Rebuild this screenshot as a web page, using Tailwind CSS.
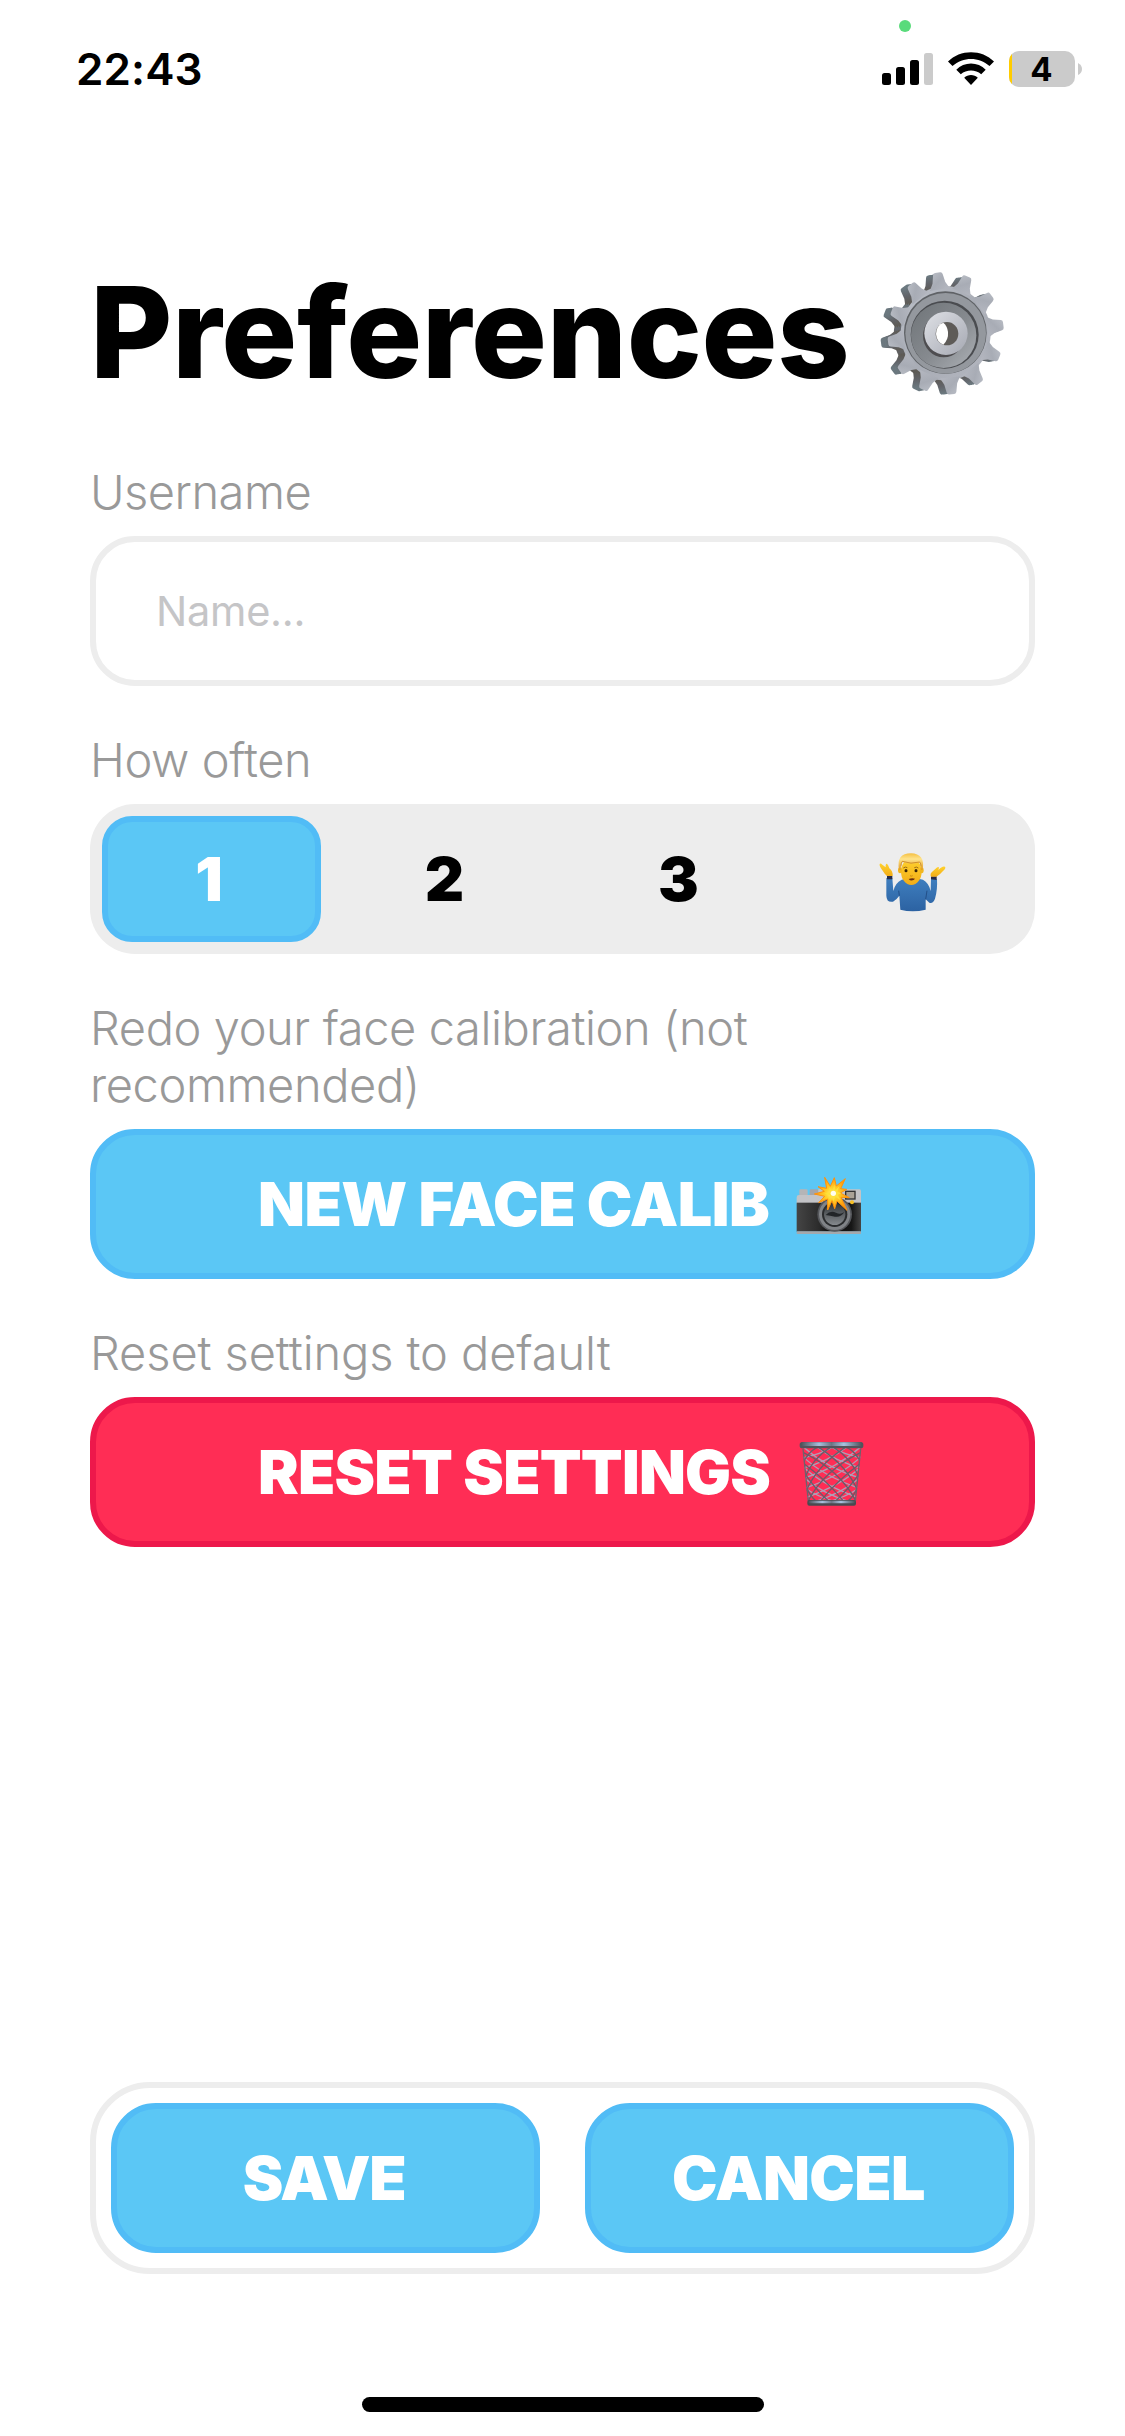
<!DOCTYPE html>
<html lang="en">
<head>
<meta charset="utf-8">
<title>Preferences</title>
<script src="https://cdn.jsdelivr.net/npm/@tailwindcss/browser@4"></script>
</head>
<body class="bg-white">
<div class="relative flex h-[2436px] w-[1125px] flex-col overflow-hidden bg-white font-['Inter',sans-serif] text-black">

  <!-- Status bar -->
  <div class="absolute left-[899px] top-[20px] size-3 rounded-full bg-[#59db7b]"></div>
  <header class="flex h-[138px] items-center pl-[76px] pr-[42px]">
    <span class="text-[44px] font-semibold leading-none tracking-[0.1px]">22:43</span>
    <svg class="ml-auto" width="202" height="38" viewBox="881 50 202 38">
      <rect x="882" y="73" width="9" height="12" rx="2.5"/>
      <rect x="896" y="67" width="9" height="18" rx="2.5"/>
      <rect x="910" y="60" width="9" height="25" rx="2.5"/>
      <rect x="924" y="53" width="9" height="32" rx="2.5" fill="#cbcbcb"/>
      <path d="M948 61.5 C960 49 982 49 994 61.5 L989.5 66 C979 56.500 963 56.500 952.500 66 Z"/>
      <path d="M956.300 69.700 C964 61.500 978 61.500 985.700 69.700 L981.200 74.300 C975.500 69.300 966.500 69.300 960.800 74.300 Z"/>
      <path d="M964.200 77.700 C968 74 974 74 977.800 77.700 L971 85 Z"/>
      <clipPath id="batt"><rect x="1009" y="51" width="66" height="36" rx="10"/></clipPath>
      <g clip-path="url(#batt)">
        <rect x="1009" y="51" width="66" height="36" fill="#cbcbcb"/>
        <rect x="1009" y="51" width="3" height="36" fill="#ffcc00"/>
      </g>
      <path d="M1078 63 Q1082 65 1082 69 Q1082 73 1078 75 Z" fill="#cbcbcb"/>
      <text x="1041.500" y="81" text-anchor="middle" font-size="33" font-weight="700">4</text>
    </svg>
  </header>

  <main class="flex flex-1 flex-col px-[90px] pt-[122px]">
    <div class="flex h-[144px] items-center">
      <h1 class="w-[770px] whitespace-nowrap text-[126.5px] font-extrabold leading-none tracking-[-0.35px]">Preferences</h1>
      <svg class="shrink-0 self-start" width="160" height="150" viewBox="0 0 480 450">
        <defs>
          <linearGradient id="face" x1="0" y1="0" x2="1" y2="1"><stop offset="0" stop-color="#bdc1c9"/><stop offset=".5" stop-color="#a8acb5"/><stop offset="1" stop-color="#b4b7c0"/></linearGradient>
          <linearGradient id="side" x1="0" y1="0" x2="0" y2="1"><stop offset="0" stop-color="#6c7a81"/><stop offset=".5" stop-color="#626469"/><stop offset="1" stop-color="#5d5952"/></linearGradient>
          <linearGradient id="hub" x1="0" y1="0" x2="1" y2="1"><stop offset="0" stop-color="#dfe1e6"/><stop offset="1" stop-color="#a5a8b2"/></linearGradient>
          <linearGradient id="dish" x1="0" y1="0" x2="1" y2="1"><stop offset="0" stop-color="#6f7478"/><stop offset=".55" stop-color="#868a8f"/><stop offset="1" stop-color="#aeb2b7"/></linearGradient>
          <path id="tooth" d="M-31 -130 L-20 -150 L-15 -174 Q-14 -180 -8 -180 H8 Q14 -180 15 -174 L20 -150 L31 -130 Z"/>
          <g id="gear">
            <circle r="139"/>
            <use href="#tooth" transform="rotate(-8)"/><use href="#tooth" transform="rotate(22)"/><use href="#tooth" transform="rotate(52)"/>
            <use href="#tooth" transform="rotate(82)"/><use href="#tooth" transform="rotate(113)"/><use href="#tooth" transform="rotate(144)"/>
            <use href="#tooth" transform="rotate(174)"/><use href="#tooth" transform="rotate(203)"/><use href="#tooth" transform="rotate(232)"/>
            <use href="#tooth" transform="rotate(262)"/><use href="#tooth" transform="rotate(292)"/><use href="#tooth" transform="rotate(323)"/>
          </g>
        </defs>
        <g fill="url(#side)">
          <use href="#gear" transform="translate(236 224) scale(.97 1)"/>
          <use href="#gear" transform="translate(241 223) scale(.97 1)"/>
          <use href="#gear" transform="translate(247 222) scale(.97 1)"/>
        </g>
        <use href="#gear" transform="translate(257 220) scale(.97 1.020)" fill="url(#face)"/>
        <circle cx="256" cy="218" r="124" fill="#5f6266"/>
        <circle cx="257" cy="220" r="121" fill="#94989e"/>
        <circle cx="254" cy="224" r="102" fill="#4a4c50"/>
        <circle cx="251" cy="226" r="98" fill="url(#dish)"/>
        <ellipse cx="251" cy="227" rx="62" ry="65" fill="#4e4d50"/>
        <ellipse cx="258" cy="220" rx="65" ry="65" fill="url(#hub)"/>
        <ellipse cx="261" cy="221" rx="34" ry="35" fill="#5e5b58"/>
        <path d="M250 188 Q229 195 228 222 Q230 246 250 254 Q266 238 264 216 Q262 198 250 188Z" fill="#fff"/>
      </svg>
    </div>

    <section class="mt-[59px]">
      <p class="text-[47px] font-light leading-[57px] tracking-[-0.5px] text-[#999]">Username</p>
      <div class="mt-4 flex h-[150px] items-center rounded-[45px] border-[6px] border-[#ededed] pl-[60px] pt-px text-[41.5px] leading-none tracking-[-0.25px] text-[#c5c5c7]">Name...</div>
    </section>

    <section class="mt-[45px]">
      <p class="text-[47px] font-light leading-[57px] tracking-[-0.4px] text-[#999]">How often</p>
      <div class="mt-4 grid h-[150px] grid-cols-4 gap-[15px] rounded-[45px] bg-[#ededed] p-3 text-[61px] font-black leading-none">
        <div class="flex items-center justify-center rounded-[30px] border-[6px] border-[#51bcf6] bg-[#5bc7f5] pr-[5px] text-white">1</div>
        <div class="flex items-center justify-center pr-0.5">2</div>
        <div class="flex items-center justify-center pr-0.5">3</div>
        <div class="flex items-center justify-center pr-[3px] pt-[5px]">
          <svg width="70" height="70" viewBox="50 50 210 210">
            <defs>
              <linearGradient id="shirt" x1="0" y1="0" x2="0" y2="1"><stop offset="0" stop-color="#3f7fbf"/><stop offset="1" stop-color="#2c62a2"/></linearGradient>
              <linearGradient id="skin" x1="0" y1="0" x2="0" y2="1"><stop offset="0" stop-color="#ffd22e"/><stop offset="1" stop-color="#f2ac17"/></linearGradient>
              <linearGradient id="hair" x1="0" y1="0" x2="0" y2="1"><stop offset="0" stop-color="#f5c043"/><stop offset=".35" stop-color="#ffe48c"/><stop offset="1" stop-color="#e09a22"/></linearGradient>
            </defs>
            <path d="M78 143 H96 L99 182 Q104 158 124 148 Q140 143 155 146 Q172 143 188 148 Q206 158 211 182 L212 145 L230 147 Q232 178 224 205 Q217 222 207 217 L196 207 V238 Q157 248 120 238 L117 196 Q108 209 98 214 Q79 218 78 196 Z" fill="url(#shirt)"/>
            <path d="M117 196 L115 181 M196 207 L200 181" stroke="#234f88" stroke-width="3" fill="none"/>
            <path d="M80 137 H96 V147 H80 Z M212 138 H229 V149 L212 147 Z" fill="#262b48"/>
            <path d="M80 137 Q73 131 67 121 Q56 108 58 101 Q60 97 66 103 L76 111 Q75 99 80 100 Q84 104 87 114 Q98 122 97 137 Z" fill="url(#skin)"/>
            <path d="M212 139 Q207 129 219 121 L229 112 Q235 108 236 112 L234 119 Q246 106 254 109 Q258 113 248 122 Q239 133 228 139 Z" fill="url(#skin)"/>
            <ellipse cx="153" cy="124" rx="31" ry="40" fill="url(#skin)"/>
            <ellipse cx="119" cy="120" rx="6" ry="9" fill="#f1b61f"/>
            <ellipse cx="184" cy="120" rx="6" ry="9" fill="#f1b61f"/>
            <path d="M116 118 Q107 69 152 69 Q195 70 187 118 L182 118 Q183 105 178 96 Q152 104 126 94 Q120 103 121 118 Z" fill="url(#hair)"/>
            <path d="M122 108 Q122 98 126 93 Q152 103 178 95 Q182 100 182 108" stroke="#c9831a" stroke-width="2.500" fill="none"/>
            <path d="M129 113 Q135 108 141 112 M162 112 Q168 108 174 113" stroke="#9b6b12" stroke-width="3" fill="none"/>
            <ellipse cx="137" cy="121" rx="4.500" ry="5" fill="#3a2508"/>
            <ellipse cx="167" cy="121" rx="4.500" ry="5" fill="#3a2508"/>
            <path d="M149 136 Q153 139 157 136" stroke="#c8860f" stroke-width="3" fill="none"/>
            <path d="M145 146 Q155 142 164 145 Q160 152 149 150 Z" fill="#6a2f10"/>
          </svg>
        </div>
      </div>
    </section>

    <section class="mt-[45px]">
      <p class="text-[47px] font-light leading-[57px] tracking-[-0.4px] text-[#999]">Redo your face calibration (not<br>recommended)</p>
      <div class="mt-4 flex h-[150px] items-center rounded-[45px] border-[6px] border-[#51bcf6] bg-[#5bc7f5] pl-[162px] text-[61px] font-black leading-none text-white">
        <span class="w-[535px] whitespace-nowrap tracking-[-0.5px]">NEW FACE CALIB</span>
        <svg class="mt-[9px]" width="70" height="70" viewBox="70 190 210 210">
          <defs>
            <linearGradient id="leather" x1="0" y1="0" x2="1" y2="0"><stop offset="0" stop-color="#454545"/><stop offset=".35" stop-color="#2b2b2b"/><stop offset=".5" stop-color="#0c0c0c"/><stop offset=".85" stop-color="#161616"/><stop offset="1" stop-color="#454545"/></linearGradient>
            <radialGradient id="burst"><stop offset="0" stop-color="#fff27a"/><stop offset=".35" stop-color="#ffd22c"/><stop offset="1" stop-color="#ff960a"/></radialGradient>
            <linearGradient id="lens" x1="0" y1="0" x2="0" y2="1"><stop offset="0" stop-color="#33373a"/><stop offset="1" stop-color="#85898d"/></linearGradient>
          </defs>
          <rect x="89" y="236" width="25" height="22" rx="4" fill="#b5b5b7"/>
          <rect x="120" y="236" width="26" height="22" rx="4" fill="#a5a5a8"/>
          <path d="M81 260 Q81 253 88 253 H146 V236 H270 Q274 236 274 242 V280 H81 Z" fill="#c3c3c6"/>
          <rect x="81" y="276" width="193" height="87" fill="url(#leather)"/>
          <rect x="81" y="362" width="193" height="8" rx="2" fill="#a4a8ac"/>
          <rect x="226" y="240" width="32" height="27" fill="#333"/>
          <rect x="230" y="244" width="24" height="19" fill="#aaa296"/>
          <circle cx="247" cy="275" r="6" fill="#f6bf25"/>
          <circle cx="195" cy="311" r="52" fill="#54565a"/>
          <circle cx="195" cy="311" r="47" fill="#808387"/>
          <circle cx="195" cy="311" r="38" fill="#2a2c2e"/>
          <circle cx="195" cy="311" r="32" fill="url(#lens)"/>
          <path d="M168 313 Q182 298 199 306 Q213 313 224 304 Q214 321 196 318 Q181 315 168 313Z" fill="#222528"/>
          <path d="M165 200 L182 227 L194 201 L200 226 L227 204 L213 234 L231 236 L212 247 L239 261 L214 260 L232 299 L202 271 L195 294 L187 270 L174 298 L174 265 L147 276 L165 257 L134 250 L164 242 L145 228 L171 233 Z" fill="url(#burst)" stroke="#ff920c" stroke-width="3"/>
          <path d="M178 230 L188 240 L194 222 L197 239 L209 227 L203 243 L216 248 L204 252 L213 269 L197 258 L191 272 L187 257 L177 267 L181 254 L164 249 L181 245 Z" fill="#ffe13a"/>
          <circle cx="191" cy="248" r="8" fill="#fffef0"/>
        </svg>
      </div>
    </section>

    <section class="mt-[45px]">
      <p class="text-[47px] font-light leading-[57px] tracking-[-0.1px] text-[#999]">Reset settings to default</p>
      <div class="mt-4 flex h-[150px] items-center rounded-[45px] border-[6px] border-[#ed184b] bg-[#ff2d55] pl-[162px] text-[61px] font-black leading-none text-white">
        <span class="w-[539px] whitespace-nowrap tracking-[-0.8px]">RESET SETTINGS</span>
        <svg class="mt-[3px]" width="70" height="70" viewBox="80 175 210 210" fill="none">
          <defs>
            <linearGradient id="rim" x1="0" y1="0" x2="1" y2="0"><stop offset="0" stop-color="#4d4f55"/><stop offset=".3" stop-color="#a9bfdd"/><stop offset=".5" stop-color="#6e7584"/><stop offset=".7" stop-color="#a8c2e0"/><stop offset="1" stop-color="#4d4f55"/></linearGradient>
            <clipPath id="bin"><path d="M97 200 H273 L256 364 H112 Z"/></clipPath>
          </defs>
          <g clip-path="url(#bin)">
            <g stroke="#b09db5" stroke-width="4">
              <path d="M95 232 Q150 222 195 195 M98 262 Q180 240 235 195 M102 292 Q205 260 275 195 M105 322 Q215 285 275 225 M108 350 Q215 312 272 258 M125 366 Q215 338 268 292 M165 366 Q225 350 262 325"/>
              <path d="M275 232 Q220 222 175 195 M272 262 Q190 240 135 195 M268 292 Q165 260 95 195 M265 322 Q155 285 95 225 M262 350 Q155 312 98 258 M245 366 Q155 338 102 292 M205 366 Q145 350 108 325"/>
            </g>
            <g stroke="#6c5b69" stroke-width="4">
              <path d="M98 248 Q112 215 140 200 M104 290 Q125 235 180 200 M108 330 Q140 255 225 200 M114 360 Q160 270 272 215 M150 362 Q200 300 268 250 M195 362 Q235 325 262 285 M232 362 Q252 345 260 322"/>
              <path d="M272 248 Q258 215 230 200 M266 290 Q245 235 190 200 M262 330 Q230 255 145 200 M256 360 Q210 270 98 215 M220 362 Q170 300 102 250 M175 362 Q135 325 108 285 M138 362 Q118 345 110 322"/>
            </g>
          </g>
          <path d="M98 204 L114 362 M271 204 L255 362" stroke="#70606c" stroke-width="4"/>
          <rect x="111" y="358" width="146" height="17" rx="6" fill="#494a50"/>
          <rect x="114" y="360" width="140" height="8" rx="4" fill="url(#rim)"/>
          <rect x="88" y="184" width="191" height="19" rx="8" fill="#53545b"/>
          <rect x="91" y="185" width="185" height="11" rx="5" fill="url(#rim)"/>
        </svg>
      </div>
    </section>
  </main>

  <!-- Actions -->
  <footer class="flex flex-col items-center px-[90px] pb-6">
    <div class="grid h-[192px] w-full grid-cols-2 gap-[45px] rounded-[60px] border-[6px] border-[#ededed] p-[15px] text-[61px] font-black leading-none text-white">
      <div class="flex items-center justify-center rounded-[45px] border-[6px] border-[#51bcf6] bg-[#5bc7f5] pr-[3px] tracking-[-1.3px]">SAVE</div>
      <div class="flex items-center justify-center rounded-[45px] border-[6px] border-[#51bcf6] bg-[#5bc7f5] pr-0.5 tracking-[-0.6px]">CANCEL</div>
    </div>
    <div class="mt-[123px] h-[15px] w-[402px] rounded-full bg-black"></div>
  </footer>
</div>
</body>
</html>
